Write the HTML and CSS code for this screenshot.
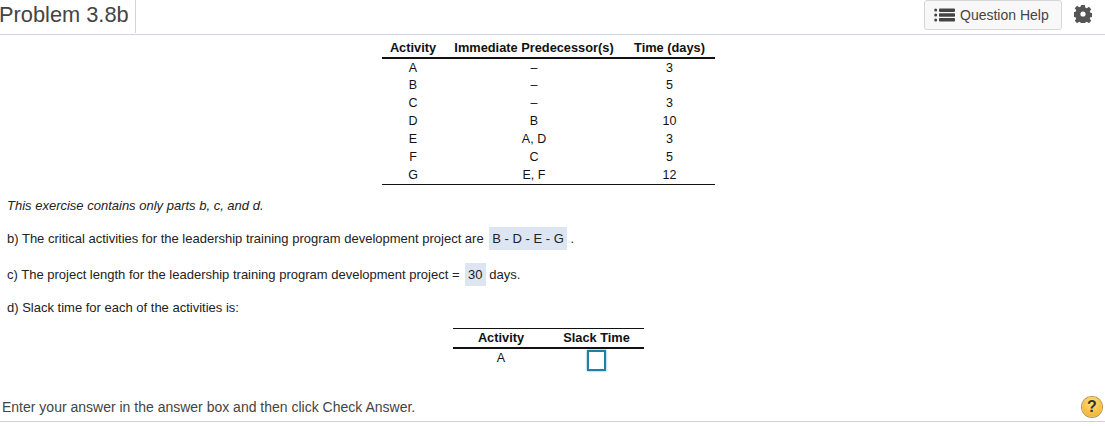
FILE: index.html
```html
<!DOCTYPE html>
<html lang="en">
<head>
    <meta charset="UTF-8">
    <title>Problem 3.8b</title>
    <link rel="stylesheet" href="styles.css">
</head>
<body>
    <div class="page">
        <header class="topbar">
            <h1 class="title">Problem 3.8b</h1>
            <div class="tools">
                <button class="help-btn">
                    <svg class="list-icon" width="21" height="14" viewBox="0 0 21 14">
                        <circle cx="1.7" cy="2" r="1.5"/>
                        <circle cx="1.7" cy="7" r="1.5"/>
                        <circle cx="1.7" cy="12" r="1.5"/>
                        <rect x="5" y="0.5" width="16" height="3.4" rx="0.8"/>
                        <rect x="5" y="5.3" width="16" height="3.4" rx="0.8"/>
                        <rect x="5" y="10.1" width="16" height="3.4" rx="0.8"/>
                    </svg>
                    Question Help
                </button>
                <svg class="gear" width="18" height="18" viewBox="0 0 18 18">
                    <path fill-rule="evenodd" d="M7.2 0h3.6l.5 2.5 1.5.7 2.2-1.4 2.2 2.4-1.4 2.1.6 1.5 2.5.5v3.4l-2.5.5-.6 1.5 1.4 2.1-2.2 2.4-2.2-1.4-1.5.7-.5 2.5H7.2l-.5-2.5-1.5-.7-2.2 1.4-2.2-2.4 1.4-2.1-.6-1.5-2.5-.5V7.3l2.5-.5.6-1.5-1.4-2.1 2.2-2.4 2.2 1.4 1.5-.7zM9 6.4a2.6 2.6 0 1 0 0 5.2 2.6 2.6 0 0 0 0-5.2z"/>
                </svg>
            </div>
        </header>

        <main class="content">
            <table class="data-table">
                <thead>
                    <tr><th class="col-a">Activity</th><th class="col-b">Immediate Predecessor(s)</th><th class="col-c">Time (days)</th></tr>
                </thead>
                <tbody>
                    <tr><td>A</td><td>–</td><td>3</td></tr>
                    <tr><td>B</td><td>–</td><td>5</td></tr>
                    <tr><td>C</td><td>–</td><td>3</td></tr>
                    <tr><td>D</td><td>B</td><td>10</td></tr>
                    <tr><td>E</td><td>A, D</td><td>3</td></tr>
                    <tr><td>F</td><td>C</td><td>5</td></tr>
                    <tr><td>G</td><td>E, F</td><td>12</td></tr>
                </tbody>
            </table>

            <p class="note">This exercise contains only parts b, c, and d.</p>
            <p class="q q-b">b) The critical activities for the leadership training program development project are <span class="answer">B - D - E - G</span> .</p>
            <p class="q q-c">c) The project length for the leadership training program development project = <span class="answer">30</span> days.</p>
            <p class="q q-d">d) Slack time for each of the activities is:</p>

            <table class="slack-table">
                <thead>
                    <tr><th class="slack-a">Activity</th><th class="slack-b">Slack Time</th></tr>
                </thead>
                <tbody>
                    <tr><td class="slack-name">A</td><td><input class="slack-input" type="text"></td></tr>
                </tbody>
            </table>
        </main>

        <footer class="statusbar">
            <span>Enter your answer in the answer box and then click Check Answer.</span>
            <span class="hint">?</span>
        </footer>
    </div>
</body>
</html>
```

FILE: styles.css
```css
body {
    margin: 0;
    padding: 0;
    font-family: "Liberation Sans", Arial, sans-serif;
    color: #111;
    background: #fff;
    overflow: hidden;
}

.page {
    height: 426px;
    display: flex;
    flex-direction: column;
}

/* Top bar */
.topbar {
    height: 34px;
    flex: none;
    display: flex;
    justify-content: space-between;
    border-bottom: 1px solid #cdd5e3;
}

.title {
    margin: 0 0 0 -1px;
    padding: 0 6px 0 0;
    height: 33px;
    line-height: 30px;
    font-size: 21.8px;
    font-weight: normal;
    color: #444;
    border-right: 1px solid #d4d4d4;
}

.tools {
    display: flex;
    align-items: flex-start;
    padding-right: 13px;
}

.help-btn {
    height: 30px;
    width: 138px;
    padding: 0 0 0 9px;
    display: flex;
    align-items: center;
    gap: 5px;
    font-family: inherit;
    font-size: 14px;
    color: #444;
    background: #f8f8f8;
    border: 1px solid #d6d6d6;
    border-radius: 3px;
}

.list-icon {
    fill: #444;
}

.gear {
    margin: 5px 0 0 12px;
    fill: #555;
}

/* Problem area */
.content {
    flex: 1;
}

table {
    border-collapse: collapse;
    font-size: 12.5px;
}

td, th {
    padding: 0;
    text-align: center;
}

.data-table {
    margin: 3px 0 0 382px;
    border-bottom: 1px solid #111;
}

.data-table thead tr {
    height: 20px;
    border-bottom: 2px solid #111;
}

.data-table tbody tr {
    height: 18px;
}

.data-table th {
    font-size: 12.8px;
}

.col-a { width: 62px; }
.col-b { width: 180px; }
.col-c { width: 91px; }

.note, .q {
    margin: 0;
    padding-left: 7px;
    font-size: 13px;
    color: #222;
}

.note {
    margin-top: 13px;
    font-style: italic;
}

.q-b { margin-top: 14px; }
.q-c { margin-top: 13px; }
.q-d { margin-top: 14px; }

.answer {
    display: inline-block;
    padding: 4px 3px;
    margin: 0 0 0 2px;
    background: #dde4f2;
}

.slack-table {
    margin: 13px 0 0 453px;
    border-top: 1px solid #111;
}

.slack-table thead tr {
    height: 20px;
    border-bottom: 2px solid #111;
}

.slack-table th {
    font-size: 12.8px;
}

.slack-table td {
    vertical-align: top;
}

.slack-table .slack-name {
    padding-top: 2px;
}

.slack-a { width: 96px; }
.slack-b { width: 95px; }

.slack-input {
    display: block;
    box-sizing: border-box;
    width: 19px;
    height: 21px;
    margin: 1px auto 0;
    padding: 0;
    background: #fff;
    border: 2px solid #1f7fa6;
    box-shadow: 0 0 2px #5aa9c9;
}

/* Bottom bar */
.statusbar {
    height: 29px;
    margin-bottom: 4px;
    flex: none;
    box-sizing: border-box;
    display: flex;
    justify-content: space-between;
    align-items: center;
    padding: 0 3px 0 2px;
    font-size: 14px;
    color: #444;
    border-bottom: 1px solid #cdd0d6;
}

.hint {
    width: 20px;
    height: 20px;
    line-height: 20px;
    text-align: center;
    font-size: 16px;
    font-weight: bold;
    color: #333;
    border-radius: 50%;
    background: radial-gradient(circle at 50% 30%, #ffe07f, #f0a81c);
    box-shadow: 0 0 0 1px #b9974a;
}
```
